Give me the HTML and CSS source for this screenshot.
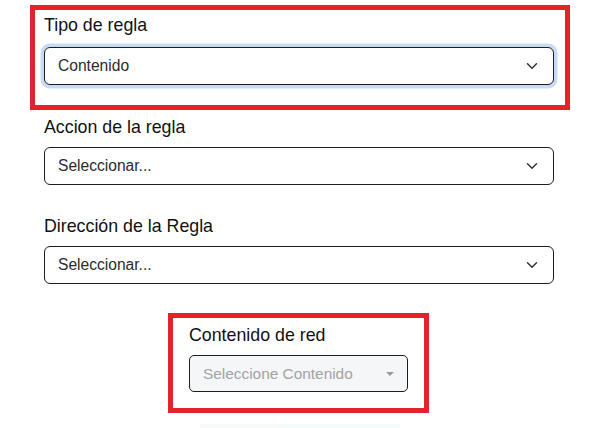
FILE: index.html
```html
<!DOCTYPE html>
<html lang="es">
<head>
<meta charset="utf-8">
<title>Regla</title>
<link rel="stylesheet" href="styles.css">
</head>
<body>
<main class="form">
  <section class="field boxed boxed-wide">
    <label class="label">Tipo de regla</label>
    <div class="select focused">
      <span class="value">Contenido</span>
      <svg class="chev" width="12" height="8" viewBox="0 0 12 8"><path d="M1.5 1.8 6 6.2l4.5-4.4" fill="none" stroke="#333" stroke-width="1.5" stroke-linecap="round" stroke-linejoin="round"/></svg>
    </div>
  </section>
  <section class="field gap-sm">
    <label class="label">Accion de la regla</label>
    <div class="select">
      <span class="value">Seleccionar...</span>
      <svg class="chev" width="12" height="8" viewBox="0 0 12 8"><path d="M1.5 1.8 6 6.2l4.5-4.4" fill="none" stroke="#333" stroke-width="1.5" stroke-linecap="round" stroke-linejoin="round"/></svg>
    </div>
  </section>
  <section class="field gap-lg">
    <label class="label">Dirección de la Regla</label>
    <div class="select">
      <span class="value">Seleccionar...</span>
      <svg class="chev" width="12" height="8" viewBox="0 0 12 8"><path d="M1.5 1.8 6 6.2l4.5-4.4" fill="none" stroke="#333" stroke-width="1.5" stroke-linecap="round" stroke-linejoin="round"/></svg>
    </div>
  </section>
  <section class="field boxed boxed-narrow">
    <label class="label">Contenido de red</label>
    <div class="select disabled">
      <span class="value">Seleccione Contenido</span>
      <span class="caret"></span>
    </div>
  </section>
  <div class="footer-hint"><span class="hint-a"></span><span class="hint-b"></span></div>
</main>
</body>
</html>
```

FILE: styles.css
```css
html, body {
  margin: 0;
  padding: 0;
  background: #ffffff;
}

body {
  font-family: "Liberation Sans", Arial, sans-serif;
  color: #111;
  overflow: hidden;
}

.form {
  display: flex;
  flex-direction: column;
  padding: 5px 28px 0 30px;
}

.field {
  display: flex;
  flex-direction: column;
}

.field:not(.boxed) {
  margin-left: 14px;
  width: 510px;
}

.gap-sm { margin-top: 7px; }
.gap-lg { margin-top: 31px; }

.label {
  font-size: 17.8px;
  line-height: 20px;
  color: #111;
  margin-bottom: 10px;
}

.boxed {
  border: 5px solid #e3232b;
}

.boxed-wide {
  padding: 5px 11px 20px 9px;
}

.boxed-wide .label {
  margin-bottom: 12px;
}

.boxed-narrow {
  align-self: flex-start;
  margin-left: 138px;
  width: 219px;
  margin-top: 29px;
  padding: 7px 16px 16px 16px;
}

.select {
  box-sizing: border-box;
  height: 38px;
  display: flex;
  align-items: center;
  justify-content: space-between;
  padding: 0 15px 0 13px;
  border: 1px solid #1d1d1d;
  border-radius: 6px;
  background: #fff;
  font-size: 15.6px;
  color: #2b2b2b;
}

.select.focused {
  box-shadow: 0 0 0 3.5px #c8dbf5;
}

.select.disabled {
  height: 37px;
  background: #f5f6f8;
  color: #a3a3a3;
  font-size: 15.4px;
  border-radius: 5px;
  padding-right: 13px;
}

.chev {
  flex: none;
}

.caret {
  width: 0;
  height: 0;
  border-left: 4px solid transparent;
  border-right: 4px solid transparent;
  border-top: 4px solid #9a9a9a;
  margin-top: 1px;
}

.footer-hint {
  align-self: flex-start;
  margin-left: 170px;
  display: flex;
  margin-top: 11px;
  width: 200px;
  height: 10px;
}

.hint-a {
  flex: 0 0 80px;
  background: #f8fafa;
}

.hint-b {
  flex: 1;
  background: #f3fbfb;
}
```
